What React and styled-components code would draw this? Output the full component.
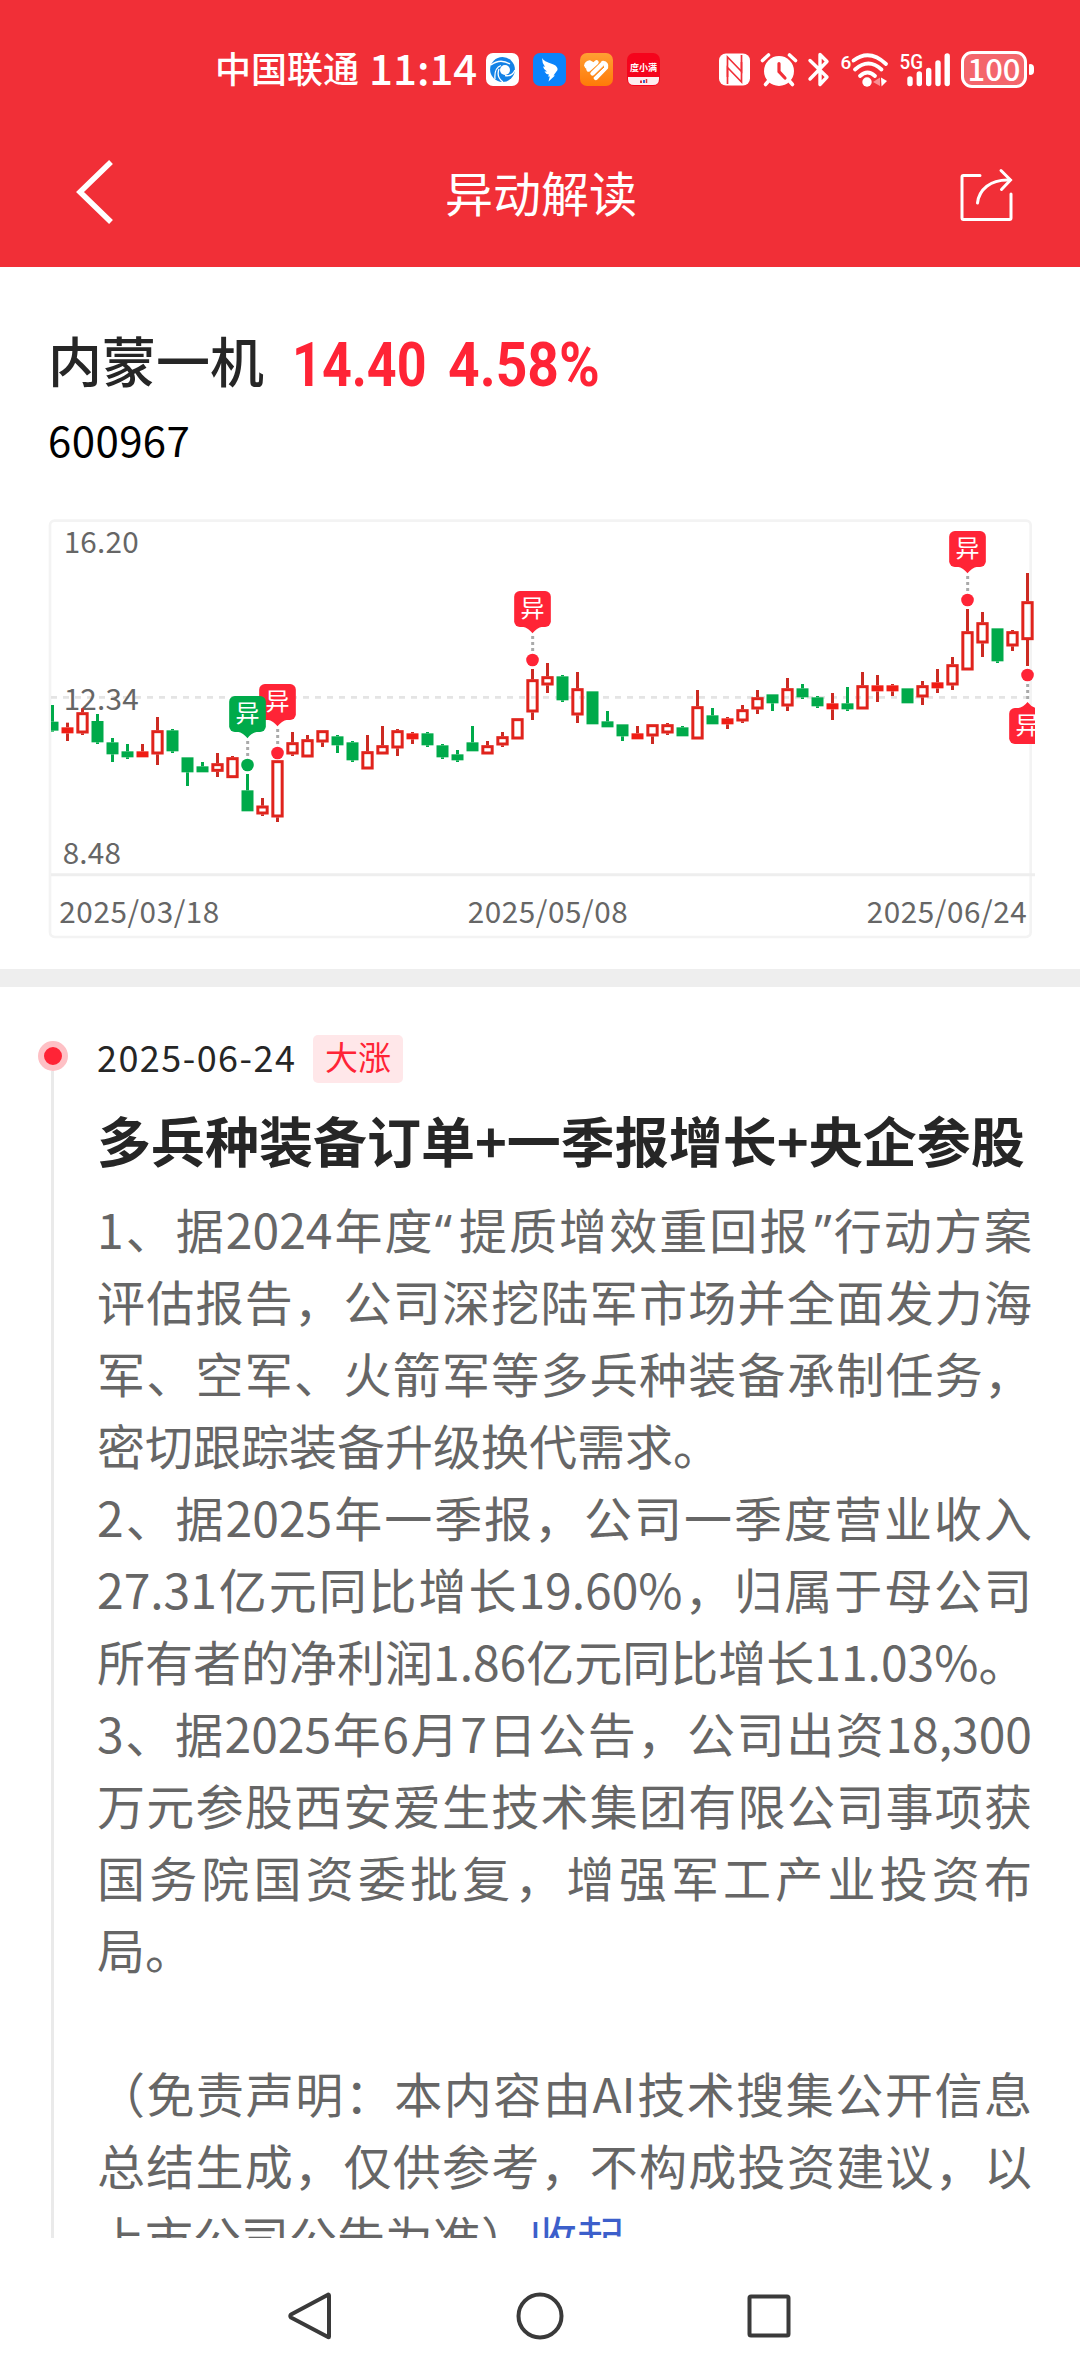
import React from "react";
import styled, { createGlobalStyle } from "styled-components";

const UP = "#e0231c";
const UP_SOLID = "#f01c14";
const DOWN = "#00aa4a";
const RED = "#ff2436";

// [type, high, top, bottom, low]  g = down, r = up (hollow), f = flat
const candles = [
  ["g", 585, 635, 662, 665],
  ["f", 638, 652, 670, 693],
  ["r", 595, 607, 670, 675],
  ["g", 612, 633, 697, 702],
  ["g", 684, 697, 733, 756],
  ["g", 702, 724, 742, 747],
  ["f", 702, 724, 742, 742],
  ["r", 621, 661, 733, 765],
  ["g", 657, 661, 724, 729],
  ["g", 742, 742, 787, 828],
  ["g", 756, 769, 787, 787],
  ["r", 729, 760, 785, 801],
  ["r", 738, 742, 804, 804],
  ["g", 792, 841, 904, 904],
  ["r", 864, 887, 913, 918],
  ["r", 751, 751, 922, 936],
  ["r", 666, 697, 733, 738],
  ["r", 675, 688, 742, 742],
  ["r", 661, 661, 697, 711],
  ["g", 675, 679, 706, 729],
  ["g", 693, 697, 751, 756],
  ["r", 675, 724, 778, 778],
  ["r", 648, 706, 733, 733],
  ["r", 657, 661, 715, 738],
  ["f", 666, 670, 688, 702],
  ["g", 666, 670, 706, 711],
  ["g", 702, 706, 742, 747],
  ["g", 720, 733, 751, 756],
  ["g", 648, 697, 724, 724],
  ["r", 693, 706, 733, 733],
  ["r", 666, 679, 706, 711],
  ["r", 625, 625, 688, 688],
  ["r", 477, 508, 607, 630],
  ["r", 459, 499, 526, 549],
  ["g", 495, 499, 571, 576],
  ["r", 486, 535, 616, 639],
  ["g", 544, 544, 643, 643],
  ["g", 603, 634, 652, 652],
  ["g", 643, 643, 679, 693],
  ["f", 648, 670, 688, 688],
  ["r", 643, 643, 679, 702],
  ["r", 639, 643, 670, 675],
  ["g", 648, 652, 679, 679],
  ["r", 540, 589, 688, 688],
  ["g", 594, 616, 643, 643],
  ["f", 621, 625, 643, 657],
  ["r", 585, 598, 634, 639],
  ["r", 540, 562, 598, 612],
  ["g", 553, 553, 580, 603],
  ["r", 504, 535, 589, 603],
  ["g", 522, 535, 562, 567],
  ["g", 558, 562, 589, 594],
  ["f", 549, 580, 598, 630],
  ["g", 531, 580, 598, 603],
  ["r", 486, 526, 598, 598],
  ["f", 495, 526, 544, 576],
  ["f", 522, 526, 544, 558],
  ["g", 535, 535, 580, 580],
  ["r", 513, 526, 562, 585],
  ["f", 477, 517, 535, 549],
  ["r", 441, 463, 526, 540],
  ["r", 297, 364, 481, 481],
  ["r", 306, 337, 400, 441],
  ["g", 355, 355, 454, 459],
  ["r", 360, 364, 409, 423],
  ["r", 189, 274, 390, 468],
];

const markers = [
  { at: 15, y: 729, color: RED },
  { at: 13, y: 765, color: DOWN },
  { at: 32, y: 450, color: RED },
  { at: 61, y: 270, color: RED },
  { at: 65, y: 495, color: RED, below: true },
];

const lines = [
  { text: "1、据2024年度“提质增效重回报”行动方案" },
  { text: "评估报告，公司深挖陆军市场并全面发力海" },
  { text: "军、空军、火箭军等多兵种装备承制任务，" },
  { text: "密切跟踪装备升级换代需求。", end: true },
  { text: "2、据2025年一季报，公司一季度营业收入" },
  { text: "27.31亿元同比增长19.60%，归属于母公司" },
  { text: "所有者的净利润1.86亿元同比增长11.03%。", end: true },
  { text: "3、据2025年6月7日公告，公司出资18,300" },
  { text: "万元参股西安爱生技术集团有限公司事项获" },
  { text: "国务院国资委批复，增强军工产业投资布" },
  { text: "局。", end: true },
  { text: "", end: true },
  { text: "（免责声明：本内容由AI技术搜集公开信息" },
  { text: "总结生成，仅供参考，不构成投资建议，以" },
];

const candleX = (i) => 37.5 + i * 45;

function Candle({ type, x, high, top, bottom, low }) {
  const color = type === "g" ? DOWN : type === "f" ? UP_SOLID : UP;
  const wick = type === "g" ? DOWN : "#cc2a22";
  return (
    <g>
      {high < top && <rect x={x - 4.5} y={high} width="9" height={top - high} fill={wick} />}
      {low > bottom && <rect x={x - 4.5} y={bottom} width="9" height={low - bottom} fill={wick} />}
      {type === "r" ? (
        <rect
          x={x - 14}
          y={top + 4}
          width="28"
          height={bottom - top - 8}
          fill="none"
          stroke={color}
          strokeWidth="9"
        />
      ) : (
        <rect x={x - 18} y={top} width="36" height={bottom - top} fill={color} />
      )}
    </g>
  );
}

function Marker({ x, y, color, below }) {
  const boxY = below ? y + 99 : y - 207;
  const tip = below
    ? `M${x - 30} ${boxY + 1} Q${x - 12} ${boxY - 2} ${x} ${boxY - 18} Q${x + 12} ${boxY - 2} ${x + 30} ${boxY + 1}Z`
    : `M${x - 30} ${boxY + 107} Q${x - 12} ${boxY + 110} ${x} ${boxY + 127} Q${x + 12} ${boxY + 110} ${x + 30} ${boxY + 107}Z`;
  const start = below ? y + 27 : y - 72;
  return (
    <g>
      <rect x={x - 55} y={boxY} width="110" height="108" rx="17" fill={color} />
      <path d={tip} fill={color} />
      <ChartGlyph x={x} y={boxY + 79}>异</ChartGlyph>
      {[0, 1, 2].map((n) => (
        <rect key={n} x={x - 4} y={start + n * 18} width="9" height="9" fill="#aaa" />
      ))}
      <circle cx={x} cy={y} r="19" fill={color} />
    </g>
  );
}

function Chart() {
  return (
    <ChartSvg viewBox="24 27 2961 1263">
      <rect x="30" y="32" width="2942" height="1249" rx="14" fill="none" stroke="#f3f3f3" strokeWidth="8" />
      <path d="M33 562H2968" stroke="#e4e4e4" strokeWidth="8" strokeDasharray="18 18" />
      <path d="M33 1094H2985" stroke="#eeeeee" strokeWidth="9" />
      <ChartText x="71" y="128" textLength="225">16.20</ChartText>
      <ChartText x="71" y="599" textLength="225">12.34</ChartText>
      <ChartText x="68" y="1061" textLength="175">8.48</ChartText>
      <ChartText x="58" y="1238" textLength="480">2025/03/18</ChartText>
      <ChartText x="1283" y="1238" textLength="480">2025/05/08</ChartText>
      <ChartText x="2480" y="1238" textLength="480">2025/06/24</ChartText>
      <svg x="33" y="27" width="2952" height="1263" viewBox="33 27 2952 1263">
        {candles.map(([type, high, top, bottom, low], i) => (
          <Candle key={i} type={type} x={candleX(i)} high={high} top={top} bottom={bottom} low={low} />
        ))}
        {markers.map((m) => (
          <Marker key={m.at} x={candleX(m.at)} y={m.y} color={m.color} below={m.below} />
        ))}
      </svg>
    </ChartSvg>
  );
}

// Status bar icons
const BrowserIcon = () => (
  <AppIcon viewBox="0 0 33 33">
    <rect width="33" height="33" rx="7" fill="#fff" />
    <circle cx="16.5" cy="16.5" r="12.4" fill="#1482e6" />
    <circle cx="19" cy="17" r="5" fill="#fff" />
    <path
      d="M5 12Q14 5 24 11M9 26Q8 15 15 12.500M17 29Q10 24 13 16M29 17Q26 24 19 22.500"
      fill="none"
      stroke="#fff"
      strokeWidth="1.3"
    />
  </AppIcon>
);

const WingIcon = () => (
  <AppIcon viewBox="0 0 33 33">
    <rect width="33" height="33" rx="7" fill="#0b84fb" />
    <path
      d="M9 5Q10 8 20.500 11.500Q25 13.500 24.500 17L20.500 22.500H22L15.500 28.500L16.800 23.500H15L16 21.500Q12.500 21 11.500 18.500L14 18.500Q10.500 16.500 10 13.500L12 13.800Q9 10 9 5Z"
      fill="#fff"
    />
  </AppIcon>
);

const HeartIcon = () => (
  <AppIcon viewBox="0 0 33 33">
    <defs>
      <linearGradient id="amber" x1="0" y1="0" x2="0" y2="1">
        <stop offset="0" stopColor="#ffa033" />
        <stop offset="1" stopColor="#ff7a08" />
      </linearGradient>
    </defs>
    <rect width="33" height="33" rx="7" fill="url(#amber)" />
    <g fill="none" stroke="#fff" strokeWidth="4.4" strokeLinecap="round">
      <path d="M7 12.500L9.500 10M8.500 16.500L16.500 9.300" />
      <path d="M12.500 20.500L22 11.200M15.800 25L26 14.500Q27 10.500 23 10" />
    </g>
    <path d="M4 12.500Q5 7.500 10 7.300L14 9.500L7.500 16.500Q4.500 15 4 12.500Z" fill="#fff" />
    <path d="M13.500 24L24 14" stroke="#ff8a1c" strokeWidth="1" />
  </AppIcon>
);

const FinanceIcon = () => (
  <AppIcon viewBox="0 0 33 33">
    <rect width="33" height="33" rx="7" fill="#f5041c" />
    <path d="M1 24H32V26Q32 32 26 32H7Q1 32 1 26Z" fill="#fdeef0" />
    <path d="M14 27.500V30" stroke="#e0303a" strokeWidth="2" />
    <path d="M17 27V30" stroke="#3a6ad0" strokeWidth="2" />
    <path d="M19.500 26V30" stroke="#e0303a" strokeWidth="1.5" />
    <AppIconText x="16.5" y="17.5">度小满</AppIconText>
  </AppIcon>
);

const NfcIcon = () => (
  <Glyph $w={31} viewBox="0 0 31 35">
    <rect y="1.5" width="31" height="32" rx="7" fill="#fff" />
    <path d="M8.500 32V5L22.500 19.500V10" fill="none" stroke="#f12f37" strokeWidth="1.7" />
    <path d="M22.500 3V30L8.500 15.500V25" fill="none" stroke="#f12f37" strokeWidth="1.7" />
    <path d="M10.500 13L20.500 23" stroke="#fff" strokeWidth="3" />
  </Glyph>
);

const AlarmIcon = () => (
  <Glyph $w={36} viewBox="0 0 36 35">
    <circle cx="18" cy="19" r="15" fill="#fff" />
    <path d="M1.500 8.500L7.500 3M34.500 8.500L28.500 3" stroke="#fff" strokeWidth="3.6" strokeLinecap="round" />
    <path d="M8 28.500L4.500 32.500M28 28.500L31.500 32.500" stroke="#fff" strokeWidth="3.6" strokeLinecap="round" />
    <path d="M18 11.500V19.500L24 26" fill="none" stroke="#f12f37" strokeWidth="3.2" strokeLinecap="round" />
  </Glyph>
);

const BluetoothIcon = () => (
  <Glyph $w={22} viewBox="0 0 22 35">
    <path
      d="M2 8.500L19 25L12 32.500V2.500L19 9.500L2 27"
      fill="none"
      stroke="#fff"
      strokeWidth="3.4"
      strokeLinecap="round"
      strokeLinejoin="round"
    />
  </Glyph>
);

const WifiIcon = () => (
  <Glyph $w={48} viewBox="0 0 48 35">
    <GlyphText x="-0.5" y="16.5" fontSize="19" textLength="10">6</GlyphText>
    <g fill="none" stroke="#fff" strokeWidth="3.8" strokeLinecap="round">
      <path d="M12.500 8.500Q28.500 -3.500 45 12" />
      <path d="M14 17.500Q27.500 5.500 40.500 17.500" />
      <path d="M19 24Q26.500 17 34 24" />
    </g>
    <circle cx="26" cy="30" r="4.7" fill="#fff" />
    <path d="M39 25.500V34L32 30Z" fill="#f98d92" />
    <path d="M40 25.500L46 29L40.500 34.500Z" fill="#fff" />
  </Glyph>
);

const SignalIcon = () => (
  <Glyph $w={50} viewBox="0 0 50 35">
    <GlyphText x="-0.5" y="17" fontSize="21" textLength="23.5" lengthAdjust="spacingAndGlyphs">5G</GlyphText>
    <path
      d="M10 27V31.500M19.300 22V31.500M28.700 18.500V31.500M38 11V31.500M47.200 4V31.500"
      stroke="#fff"
      strokeWidth="5.4"
      strokeLinecap="round"
    />
  </Glyph>
);

const ShareIcon = () => (
  <ShareSvg viewBox="0 0 56 56">
    <path d="M20 7.500H3.500Q2 7.500 2 9V50Q2 51.500 3.500 51.500H49.500Q51 51.500 51 50V26" />
    <path d="M17.500 35C19 22 30 11 50 12" />
    <path d="M41 2.500L50.500 12L41.500 21.500" />
  </ShareSvg>
);

// Curly quotes keep their narrow latin shape inside the chinese text
const withQuotes = (text) =>
  text.split(/([“”])/).map((part, i) => {
    if (part === "“") return <Quote key={i}>{part}</Quote>;
    if (part === "”") return <Quote key={i} $right>{part}</Quote>;
    return part;
  });

export default function App() {
  return (
    <Screen>
      <GlobalStyle />

      <StatusBar>
        <Carrier>中国联通</Carrier>
        <Clock>11:14</Clock>
        <AppIcons>
          <BrowserIcon />
          <WingIcon />
          <HeartIcon />
          <FinanceIcon />
        </AppIcons>
        <SystemIcons>
          <NfcIcon />
          <AlarmIcon />
          <BluetoothIcon />
          <WifiIcon />
          <SignalIcon />
          <Battery>
            <BatteryLevel>100</BatteryLevel>
            <BatteryTip />
          </Battery>
        </SystemIcons>
      </StatusBar>

      <NavBar>
        <BackSvg viewBox="0 0 40 68">
          <path d="M36 4L5 34L36 64" />
        </BackSvg>
        <PageTitle>异动解读</PageTitle>
        <ShareIcon />
      </NavBar>

      <Content>
        <Quotes>
          <QuoteRow>
            <StockName>内蒙一机</StockName>
            <Price $w={156} $scale={0.84}>14.40</Price>
            <Price $w={170} $scale={0.89}>4.58%</Price>
          </QuoteRow>
          <StockCode>600967</StockCode>
          <Chart />
        </Quotes>

        <Divider />

        <Timeline>
          <Rail>
            <RailDot />
            <RailLine />
          </Rail>
          <Entry>
            <EntryMeta>
              <EntryDate>2025-06-24</EntryDate>
              <Tag>大涨</Tag>
            </EntryMeta>
            <EntryTitle>多兵种装备订单+一季报增长+央企参股</EntryTitle>
            {lines.map((line, i) => (
              <Line key={i} $end={line.end}>{withQuotes(line.text)}</Line>
            ))}
            <Line $end>
              上市公司公告为准）<Toggle>收起</Toggle>
            </Line>
          </Entry>
        </Timeline>
      </Content>

      <SystemNav>
        <NavSvg viewBox="0 0 48 52">
          <path d="M43 5.500V46.500Q43 48 41.500 46.800L5 27.500Q3.500 26 5 24.500L41.500 5Q43 4 43 5.500Z" />
        </NavSvg>
        <NavSvg viewBox="0 0 48 52">
          <circle cx="24" cy="26" r="21.5" />
        </NavSvg>
        <NavSvg viewBox="0 0 48 52">
          <rect x="4.5" y="6.5" width="39" height="39" rx="1.5" />
        </NavSvg>
      </SystemNav>
    </Screen>
  );
}

// Styles

const GlobalStyle = createGlobalStyle`
  * {
    box-sizing: border-box;
  }

  body {
    margin: 0;
    background: #fff;
    font-family: "Noto Sans CJK SC", sans-serif;
  }
`;

const Screen = styled.div`
  width: 1080px;
  height: 2376px;
  display: flex;
  flex-direction: column;
  overflow: hidden;
  background: #fff;
`;

const StatusBar = styled.div`
  height: 117px;
  padding: 22px 46px 0 215px;
  display: flex;
  align-items: center;
  background: #f12f37;
  color: #fff;
`;

const Carrier = styled.div`
  width: 154px;
  margin-top: -5px;
  font-size: 36px;
  font-weight: 500;
  line-height: 48px;
  white-space: nowrap;
`;

const Clock = styled.div`
  width: 117px;
  margin-top: -6px;
  font-size: 42px;
  font-weight: 500;
  line-height: 48px;
  white-space: nowrap;
`;

const AppIcons = styled.div`
  display: flex;
  gap: 14px;
`;

const AppIcon = styled.svg`
  width: 33px;
  height: 33px;
`;

const AppIconText = styled.text`
  font-size: 9px;
  font-weight: 700;
  text-anchor: middle;
  fill: #fff;
`;

const SystemIcons = styled.div`
  margin-left: auto;
  display: flex;
  align-items: center;
  gap: 11px;
`;

const Glyph = styled.svg`
  width: ${(p) => p.$w}px;
  height: 35px;
  overflow: visible;
`;

const GlyphText = styled.text`
  font-family: Roboto, sans-serif;
  font-weight: 500;
  fill: #fff;
`;

const Battery = styled.div`
  display: flex;
  align-items: center;
  gap: 2px;
`;

const BatteryLevel = styled.div`
  width: 66px;
  height: 37px;
  border: 3px solid #fff;
  border-radius: 11px;
  background: #f4666c;
  font-size: 31px;
  font-weight: 500;
  line-height: 28px;
  text-align: center;
`;

const BatteryTip = styled.div`
  width: 5px;
  height: 11px;
  border-radius: 1px 4px 4px 1px;
  background: #fff;
`;

const NavBar = styled.div`
  height: 150px;
  padding: 0 64px 0 75px;
  display: flex;
  justify-content: space-between;
  align-items: flex-start;
  background: #f12f37;
  color: #fff;
`;

const BackSvg = styled.svg`
  width: 40px;
  height: 68px;
  margin-top: 41px;
  fill: none;
  stroke: #fff;
  stroke-width: 5.5;
`;

const PageTitle = styled.h1`
  margin: 41px 0 0 7px;
  font-size: 48px;
  font-weight: 400;
  line-height: 66px;
`;

const ShareSvg = styled.svg`
  width: 56px;
  height: 56px;
  margin-top: 51px;
  fill: none;
  stroke: #fff;
  stroke-width: 3;
  stroke-linecap: round;
`;

const Content = styled.div`
  height: 1971px;
  overflow: hidden;
`;

const Quotes = styled.div`
  height: 702px;
  padding: 60px 45px 0 48px;
`;

const QuoteRow = styled.div`
  height: 75px;
  display: flex;
  align-items: center;
`;

const StockName = styled.div`
  width: 244px;
  font-size: 54px;
  font-weight: 500;
  line-height: 70px;
  color: #262626;
  margin-top: -9px;
`;

const Price = styled.div`
  width: ${(p) => p.$w}px;
  font-family: Roboto, sans-serif;
  font-size: 62px;
  font-weight: 700;
  line-height: 72px;
  color: ${RED};
  white-space: nowrap;
  transform: scaleX(${(p) => p.$scale});
  transform-origin: left;
`;

const StockCode = styled.div`
  height: 117px;
  font-size: 42px;
  line-height: 74px;
  letter-spacing: 0.4px;
  color: #000;
`;

const ChartSvg = styled.svg`
  display: block;
  width: 987px;
  height: 421px;
`;

const ChartText = styled.text`
  font-size: 89px;
  fill: #666;
`;

const ChartGlyph = styled.text`
  font-size: 72px;
  text-anchor: middle;
  fill: #fff;
`;

const Divider = styled.div`
  height: 18px;
  background: #eee;
`;

const Timeline = styled.div`
  display: flex;
  padding: 0 48px 0 38px;
`;

const Rail = styled.div`
  width: 59px;
  padding-top: 54px;
  flex-shrink: 0;
`;

const RailDot = styled.div`
  width: 30px;
  height: 30px;
  border: 6px solid #fec0c5;
  border-radius: 50%;
  background: ${RED};
`;

const RailLine = styled.div`
  width: 3px;
  height: 1200px;
  margin-left: 13px;
  background: #eaeaea;
`;

const Entry = styled.div`
  width: 935px;
`;

const EntryMeta = styled.div`
  display: flex;
  align-items: center;
  height: 48px;
  margin-top: 48px;
`;

const EntryDate = styled.div`
  width: 216px;
  margin-top: -7px;
  font-size: 36px;
  line-height: 48px;
  letter-spacing: 1.45px;
  color: #262626;
`;

const Tag = styled.div`
  width: 90px;
  height: 48px;
  border-radius: 5px;
  background: #ffe7e9;
  color: ${RED};
  font-size: 33px;
  line-height: 43px;
  text-align: center;
`;

const EntryTitle = styled.h2`
  margin: 18px 0 13px;
  font-size: 54px;
  font-weight: 700;
  line-height: 78px;
  white-space: nowrap;
  color: #262626;
`;

const Line = styled.div`
  height: 72px;
  font-size: 48px;
  line-height: 72px;
  color: #666;
  white-space: nowrap;
  text-align: justify;
  text-align-last: ${(p) => (p.$end ? "left" : "justify")};
`;

const Quote = styled.span`
  font-family: "Noto Sans", sans-serif;
  line-height: 1;
  margin: ${(p) => (p.$right ? "0 0 0 5px" : "0 5px 0 0")};
`;

const Toggle = styled.span`
  color: #3c5fcb;
`;

const SystemNav = styled.div`
  height: 138px;
  padding: 52px 287px 0 286px;
  display: flex;
  justify-content: space-between;
`;

const NavSvg = styled.svg`
  width: 48px;
  height: 52px;
  fill: none;
  stroke: #3a3a3a;
  stroke-width: 4;
  stroke-linejoin: round;
`;
